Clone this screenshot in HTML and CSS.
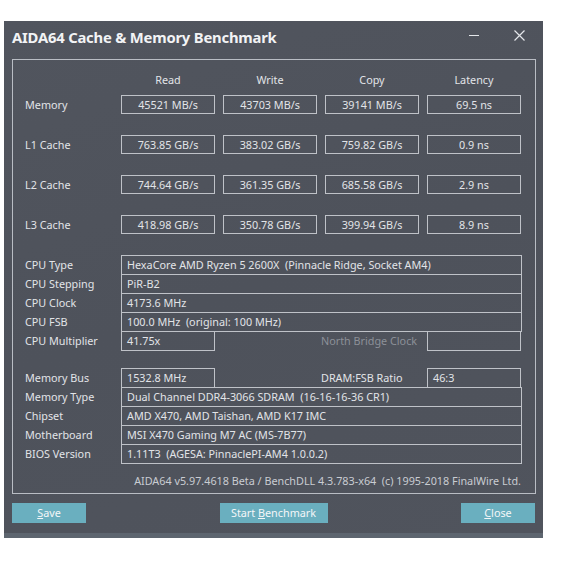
FILE: index.html
```html
<!DOCTYPE html>
<html lang="en">
    <head>
        <meta name="viewport" content="width=device-width, initial-scale=1" />
        <title>AIDA64 Cache &amp; Memory Benchmark</title>
        <link rel="stylesheet" href="styles.css">
    </head>
    <body>
        <div class="window">
            <div class="titlebar">
                <span class="title">AIDA64 Cache &amp; Memory Benchmark</span>
                <svg class="btn-min" width="10" height="10" viewBox="0 0 10 10"><path d="M0 5.5H10" stroke="#e4e6ea" stroke-width="1" /></svg>
                <svg class="btn-close" width="11" height="11" viewBox="0 0 11 11"><path d="M0.5 0.5L10.5 10.5M10.5 0.5L0.5 10.5" stroke="#e4e6ea" stroke-width="1.2" /></svg>
            </div>

            <div class="frame">
                <div class="bench heads">
                    <span></span>
                    <span class="head">Read</span>
                    <span class="head">Write</span>
                    <span class="head">Copy</span>
                    <span class="head">Latency</span>
                </div>

                <div class="bench">
                    <span class="label">Memory</span>
                    <span class="val">45521 MB/s</span>
                    <span class="val">43703 MB/s</span>
                    <span class="val">39141 MB/s</span>
                    <span class="val">69.5 ns</span>

                    <span class="label">L1 Cache</span>
                    <span class="val">763.85 GB/s</span>
                    <span class="val">383.02 GB/s</span>
                    <span class="val">759.82 GB/s</span>
                    <span class="val">0.9 ns</span>

                    <span class="label">L2 Cache</span>
                    <span class="val">744.64 GB/s</span>
                    <span class="val">361.35 GB/s</span>
                    <span class="val">685.58 GB/s</span>
                    <span class="val">2.9 ns</span>

                    <span class="label">L3 Cache</span>
                    <span class="val">418.98 GB/s</span>
                    <span class="val">350.78 GB/s</span>
                    <span class="val">399.94 GB/s</span>
                    <span class="val">8.9 ns</span>
                </div>

                <div class="info">
                    <div class="row"><span class="label">CPU Type</span><span class="field wide">HexaCore AMD Ryzen 5 2600X&nbsp; (Pinnacle Ridge, Socket AM4)</span></div>
                    <div class="row"><span class="label">CPU Stepping</span><span class="field wide">PiR-B2</span></div>
                    <div class="row"><span class="label">CPU Clock</span><span class="field wide">4173.6 MHz</span></div>
                    <div class="row"><span class="label">CPU FSB</span><span class="field wide">100.0 MHz&nbsp; (original: 100 MHz)</span></div>
                    <div class="row">
                        <span class="label">CPU Multiplier</span><span class="field short">41.75x</span>
                        <span class="spacer"></span>
                        <span class="label-right disabled">North Bridge Clock</span><span class="field short"></span>
                    </div>
                </div>

                <div class="info">
                    <div class="row">
                        <span class="label">Memory Bus</span><span class="field short">1532.8 MHz</span>
                        <span class="spacer"></span>
                        <span class="label-right">DRAM:FSB Ratio</span><span class="field short">46:3</span>
                    </div>
                    <div class="row"><span class="label">Memory Type</span><span class="field wide">Dual Channel DDR4-3066 SDRAM&nbsp; (16-16-16-36 CR1)</span></div>
                    <div class="row"><span class="label">Chipset</span><span class="field wide">AMD X470, AMD Taishan, AMD K17 IMC</span></div>
                    <div class="row"><span class="label">Motherboard</span><span class="field wide">MSI X470 Gaming M7 AC (MS-7B77)</span></div>
                    <div class="row"><span class="label">BIOS Version</span><span class="field wide">1.11T3&nbsp; (AGESA: PinnaclePI-AM4 1.0.0.2)</span></div>
                </div>

                <div class="footer">AIDA64 v5.97.4618 Beta / BenchDLL 4.3.783-x64&nbsp; (c) 1995-2018 FinalWire Ltd.</div>
            </div>

            <div class="buttons">
                <button class="btn save"><u>S</u>ave</button>
                <button class="btn start">Start <u>B</u>enchmark</button>
                <button class="btn close"><u>C</u>lose</button>
            </div>
        </div>
    </body>
</html>
```

FILE: styles.css
```css
body {
    margin: 0;
    background-color: #ffffff;
    font-family: "Noto Sans", "Open Sans", sans-serif;
    font-size: 10.8px;
    color: #e2e4e8;
}
.window {
    margin: 21px 0 0 4px;
    width: 539px;
    height: 517px;
    box-sizing: border-box;
    background: linear-gradient(160deg, #51555e 0%, #4e525b 50%, #50545d 100%);
    border-bottom: 5px solid #5d656f;
}
.titlebar {
    height: 38px;
    display: flex;
    align-items: flex-start;
    padding: 0 18px 0 8px;
}
.title {
    font-size: 14.8px;
    font-weight: bold;
    line-height: 20px;
    margin-top: 6px;
    color: #f2f3f5;
    letter-spacing: -0.2px;
}
.btn-min {
    margin-left: auto;
    margin-top: 9px;
}
.btn-close {
    margin-left: 35px;
    margin-top: 9px;
}
.frame {
    margin-left: 8px;
    width: 524px;
    box-sizing: border-box;
    border: 1px solid #b9bdc4;
    padding: 12px 13px 4px 12px;
}
.bench {
    display: grid;
    grid-template-columns: 88px repeat(4, 94px);
    column-gap: 8px;
    row-gap: 21px;
    grid-auto-rows: 19px;
}
.bench.heads {
    grid-auto-rows: 16px;
    margin-bottom: 7px;
}
.head {
    text-align: center;
    line-height: 16px;
}
.bench .label {
    line-height: 19px;
}
.val {
    border: 1px solid #bfc2c8;
    box-sizing: border-box;
    height: 19px;
    line-height: 17px;
    text-align: center;
}
.info {
    margin-top: 21px;
}
.info + .info {
    margin-top: 18px;
}
.row {
    display: flex;
    height: 19px;
}
.row .label {
    width: 96px;
    line-height: 19px;
}
.field {
    border: 1px solid #bfc2c8;
    box-sizing: border-box;
    height: 20px;
    line-height: 18px;
    padding-left: 5px;
}
.field.wide {
    flex: 1;
}
.field.short {
    width: 94px;
}
.spacer {
    width: 106px;
}
.label-right {
    width: 106px;
    line-height: 19px;
}
.disabled {
    color: #8c9098;
}
.footer {
    margin-top: 10px;
    line-height: 16px;
    text-align: right;
    padding-right: 1px;
    color: #c9ccd2;
}
.buttons {
    display: flex;
    justify-content: space-between;
    margin: 9px 8px 0 8px;
    width: 523px;
}
.btn {
    height: 20px;
    border: none;
    padding: 0;
    background-color: #6aafbf;
    color: #f4f6f8;
    font-family: "Noto Sans", "Open Sans", sans-serif;
    font-size: 10.8px;
    line-height: 20px;
}
.save,
.close {
    width: 74px;
}
.start {
    width: 108px;
}
```
